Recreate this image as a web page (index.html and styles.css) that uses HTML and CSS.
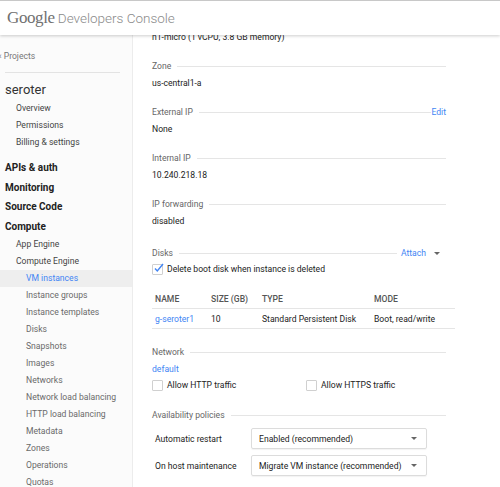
FILE: index.html
```html
<!DOCTYPE html>
<html lang="en">
<head>
    <meta charset="UTF-8">
    <title>Google Developers Console - VM instance</title>
    <link rel="stylesheet" href="styles.css">
</head>
<body>
    <div class="header">
        <span class="logo-google">Google</span>
        <span class="logo-product">Developers Console</span>
    </div>

    <div class="layout">
        <!-- Left navigation -->
        <div class="sidebar">
            <div class="back">&lsaquo; Projects</div>
            <div class="divider"></div>
            <div class="project">seroter</div>
            <div class="nav-item">Overview</div>
            <div class="nav-item">Permissions</div>
            <div class="nav-item">Billing &amp; settings</div>

            <div class="nav-group first">APIs &amp; auth</div>
            <div class="nav-group">Monitoring</div>
            <div class="nav-group">Source Code</div>
            <div class="nav-group">Compute</div>
            <div class="nav-item">App Engine</div>
            <div class="nav-item">Compute Engine</div>
            <div class="nav-sub active">VM instances</div>
            <div class="nav-sub">Instance groups</div>
            <div class="nav-sub">Instance templates</div>
            <div class="nav-sub">Disks</div>
            <div class="nav-sub">Snapshots</div>
            <div class="nav-sub">Images</div>
            <div class="nav-sub">Networks</div>
            <div class="nav-sub">Network load balancing</div>
            <div class="nav-sub">HTTP load balancing</div>
            <div class="nav-sub">Metadata</div>
            <div class="nav-sub">Zones</div>
            <div class="nav-sub">Operations</div>
            <div class="nav-sub">Quotas</div>
        </div>

        <!-- Instance details -->
        <div class="main">
            <div class="value machine">n1-micro (1 vCPU, 3.8 GB memory)</div>

            <div class="section">
                <div class="section-head"><span>Zone</span><span class="rule"></span></div>
                <div class="value">us-central1-a</div>
            </div>

            <div class="section">
                <div class="section-head"><span>External IP</span><span class="rule"></span><a class="link">Edit</a></div>
                <div class="value">None</div>
            </div>

            <div class="section">
                <div class="section-head"><span>Internal IP</span><span class="rule"></span></div>
                <div class="value">10.240.218.18</div>
            </div>

            <div class="section forwarding">
                <div class="section-head"><span>IP forwarding</span><span class="rule"></span></div>
                <div class="value">disabled</div>
            </div>

            <div class="section disks">
                <div class="section-head">
                    <span>Disks</span><span class="rule short"></span>
                    <a class="link attach">Attach</a><span class="caret"></span>
                </div>
                <label class="check-row">
                    <span class="checkbox checked">
                        <svg width="11" height="10" viewBox="0 0 11 10"><path d="M2 5.5 L4.3 8 L10 1" fill="none" stroke="#4285f4" stroke-width="1.4"/></svg>
                    </span>
                    Delete boot disk when instance is deleted
                </label>
                <table class="disk-table">
                    <thead>
                        <tr><th class="col-name">NAME</th><th class="col-size">SIZE (GB)</th><th class="col-type">TYPE</th><th>MODE</th></tr>
                    </thead>
                    <tbody>
                        <tr><td><a class="link">g-seroter1</a></td><td>10</td><td>Standard Persistent Disk</td><td>Boot, read/write</td></tr>
                    </tbody>
                </table>
            </div>

            <div class="section network">
                <div class="section-head"><span>Network</span><span class="rule"></span></div>
                <div class="value"><a class="link">default</a></div>
                <div class="traffic">
                    <label class="check-row http"><span class="checkbox"></span>Allow HTTP traffic</label>
                    <label class="check-row"><span class="checkbox"></span>Allow HTTPS traffic</label>
                </div>
            </div>

            <div class="section policies">
                <div class="section-head"><span>Availability policies</span><span class="rule"></span></div>
                <div class="policy-row">
                    <span class="policy-label">Automatic restart</span>
                    <div class="select">Enabled (recommended)<span class="caret"></span></div>
                </div>
                <div class="policy-row">
                    <span class="policy-label">On host maintenance</span>
                    <div class="select">Migrate VM instance (recommended)<span class="caret"></span></div>
                </div>
            </div>
        </div>
    </div>
</body>
</html>
```

FILE: styles.css
```css
/* Basic styling */
body {
    margin: 0;
    font-family: Roboto, "Liberation Sans", sans-serif;
    font-size: 8.6px;
    color: #222;
    background-color: #ffffff;
    overflow: hidden;
}
.header {
    position: relative;
    z-index: 2;
    height: 35px;
    box-sizing: border-box;
    border-top: 1px solid #c8c8c8;
    padding: 7px 0 0 7px;
    background-color: #ffffff;
    box-shadow: 0 1px 3px rgba(0, 0, 0, 0.2);
    white-space: nowrap;
}
.logo-google {
    font-family: "Liberation Serif", serif;
    font-size: 17px;
    color: #707070;
    letter-spacing: -0.4px;
}
.logo-product {
    font-size: 13.5px;
    font-weight: 300;
    color: #8a8a8a;
    margin-left: 1px;
}
.layout {
    display: flex;
    height: 452px;
}

/* Sidebar */
.sidebar {
    width: 133px;
    flex-shrink: 0;
    background-color: #fbfbfb;
    border-right: 1px solid #ececec;
    box-sizing: border-box;
    padding-top: 13px;
    color: #555;
}
.back {
    line-height: 17px;
    padding-left: 2px;
    color: #777;
    margin-left: -3px;
}
.divider {
    height: 1px;
    background-color: #e3e3e3;
    margin: 7px 12px 0 5px;
}
.project {
    font-size: 13px;
    line-height: 20px;
    color: #333;
    padding-left: 5px;
    margin-top: 7px;
}
.nav-item {
    line-height: 17px;
    padding-left: 16px;
    color: #444;
}
.nav-group {
    font-size: 10px;
    font-weight: bold;
    color: #222;
    line-height: 19.5px;
    padding-left: 5px;
}
.nav-group.first {
    margin-top: 7px;
}
.nav-sub {
    line-height: 17px;
    padding-left: 26px;
    color: #6a6a6a;
}
.nav-sub.active {
    background-color: #eeeeee;
    color: #4285f4;
}

/* Main panel */
.main {
    flex: 1;
    margin-top: -6px;
    padding-left: 19px;
}
.value {
    line-height: 17px;
    color: #222;
}
.machine {
    margin-bottom: 12px;
}
.section {
    width: 294px;
    margin-bottom: 12px;
}
.forwarding {
    margin-bottom: 15px;
}
.section-head {
    display: flex;
    align-items: center;
    line-height: 17px;
    color: #666;
}
.rule {
    flex: 1;
    height: 1px;
    background-color: #e5e5e5;
    margin-left: 6px;
}
.rule.short {
    margin-right: 4px;
}
.link {
    color: #4285f4;
    cursor: pointer;
}
.attach {
    margin-right: 8px;
}
.caret {
    width: 0;
    height: 0;
    border-left: 3px solid transparent;
    border-right: 3px solid transparent;
    border-top: 3px solid #666;
    margin-right: 6px;
}
.disks {
    width: 303px;
    margin-bottom: 15px;
}
.disks .section-head {
    width: 294px;
}
.check-row {
    display: flex;
    align-items: center;
    line-height: 15px;
    color: #222;
}
.checkbox {
    width: 9px;
    height: 9px;
    border: 1px solid #d0d0d0;
    border-radius: 1px;
    margin-right: 4px;
    position: relative;
}
.checkbox svg {
    position: absolute;
    left: 0;
    top: -2px;
}
.disk-table {
    width: 303px;
    border-collapse: collapse;
    margin-top: 13px;
}
.disk-table th {
    text-align: left;
    font-weight: 500;
    color: #555;
    height: 18px;
    padding: 0 0 0 3px;
    border-bottom: 1px solid #e5e5e5;
}
.disk-table td {
    height: 19px;
    padding: 0 0 0 3px;
    border-bottom: 1px solid #e5e5e5;
}
.col-name {
    width: 53px;
}
.col-size {
    width: 48px;
}
.col-type {
    width: 109px;
}
.network {
    margin-bottom: 14px;
}
.traffic {
    display: flex;
    margin-top: 0;
}
.traffic .http {
    width: 154px;
}
.policies .section-head {
    margin-bottom: 4px;
}
.policy-row {
    display: flex;
    align-items: center;
    margin-bottom: 6px;
}
.policy-label {
    width: 96px;
    padding-left: 3px;
}
.select {
    width: 176px;
    height: 21px;
    box-sizing: border-box;
    border: 1px solid #dcdcdc;
    border-radius: 2px;
    box-shadow: 0 1px 1px rgba(0, 0, 0, 0.05);
    display: flex;
    align-items: center;
    justify-content: space-between;
    padding-left: 7px;
    padding-right: 3px;
}
```
